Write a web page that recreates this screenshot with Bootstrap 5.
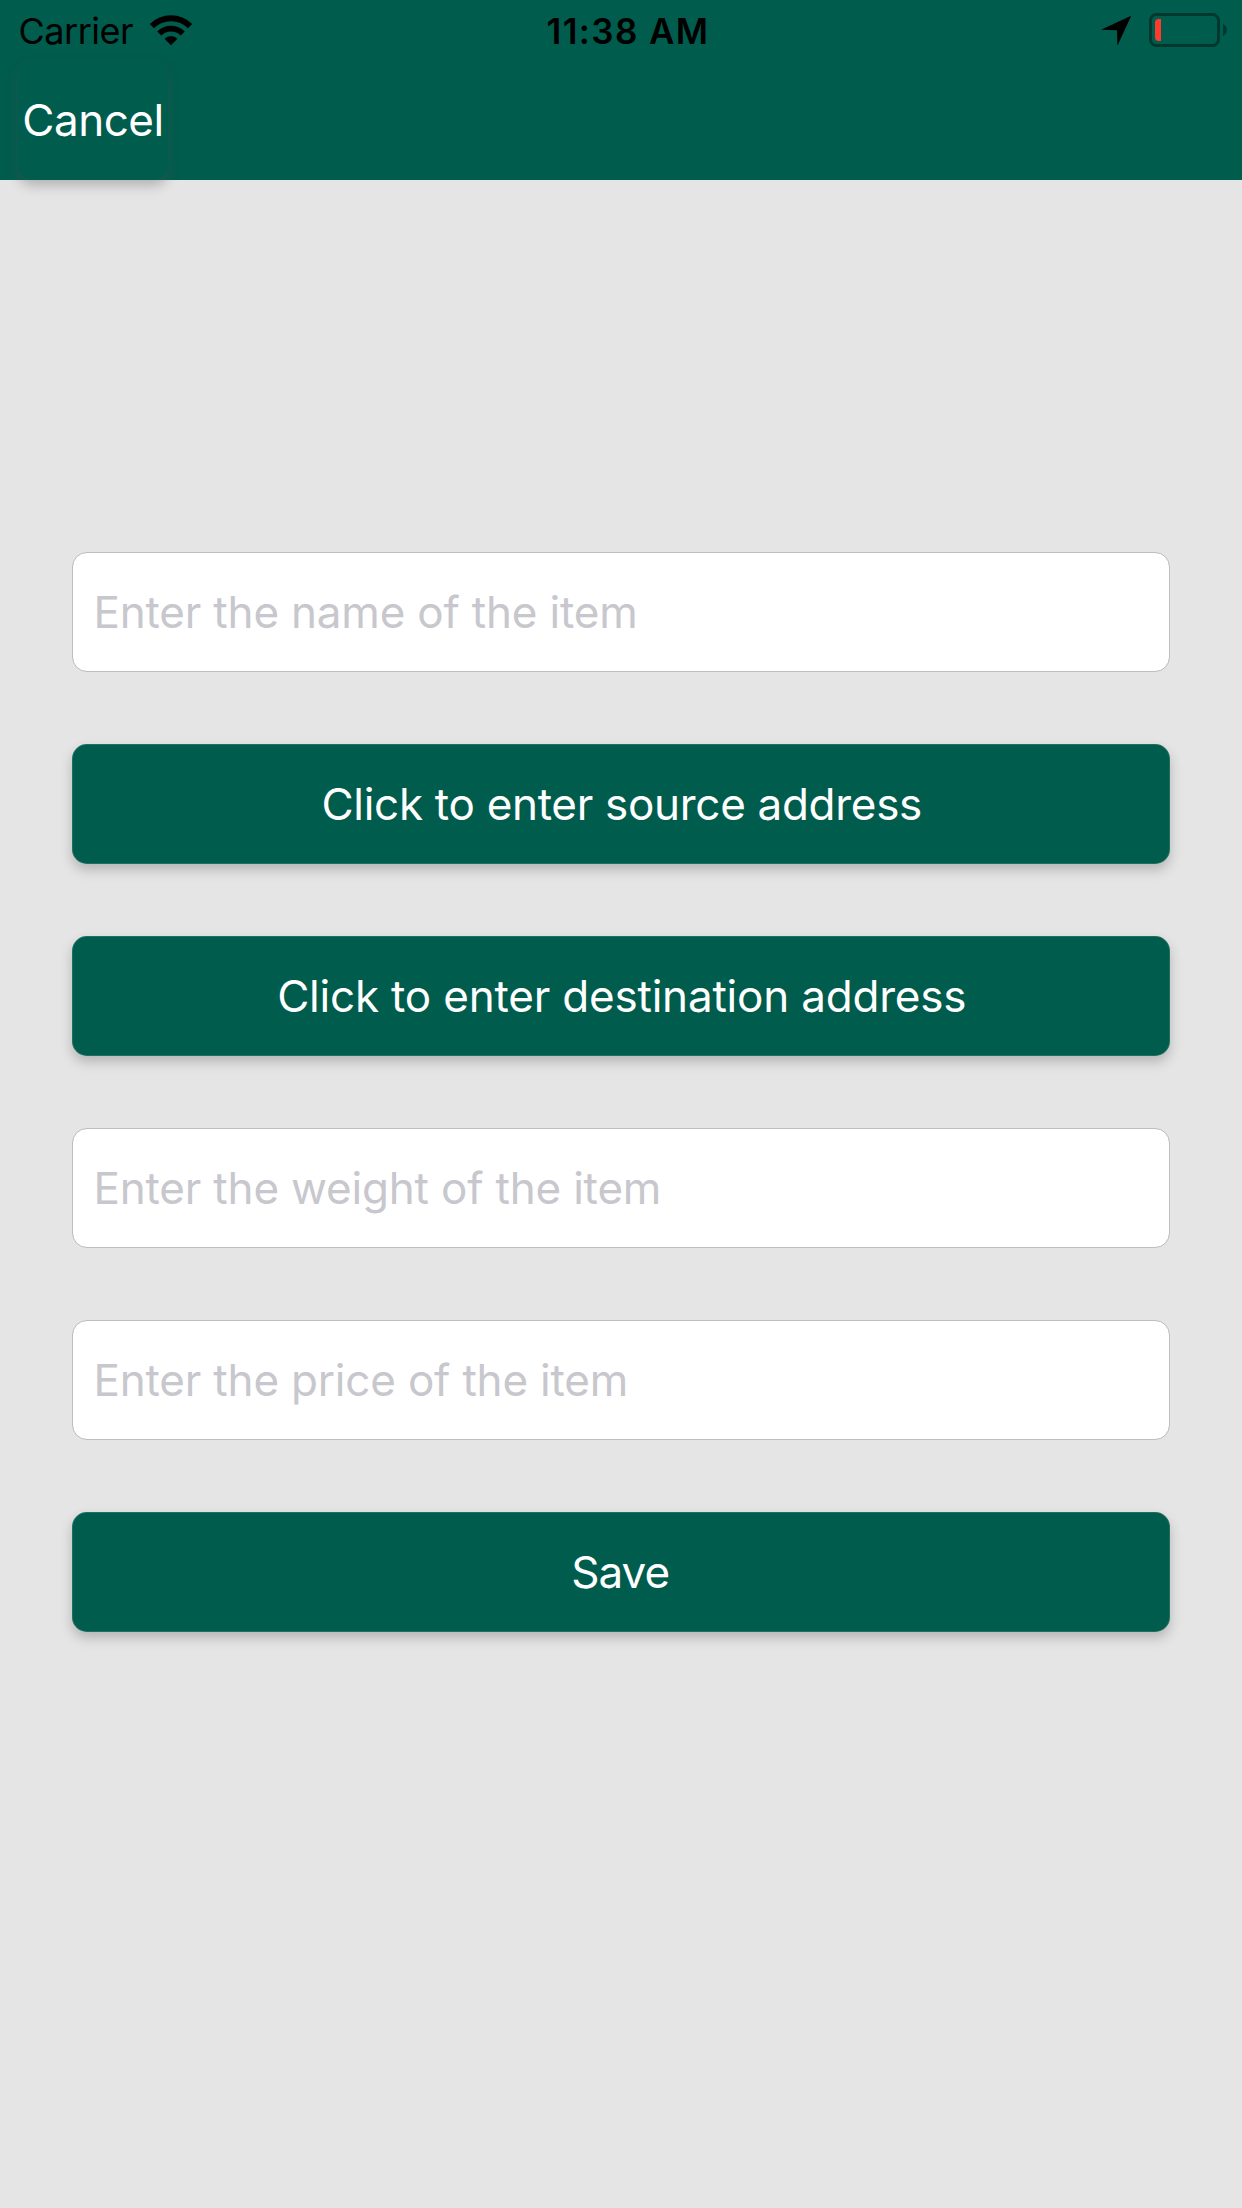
<!DOCTYPE html>
<html lang="en">
<head>
<meta charset="utf-8">
<meta name="viewport" content="width=device-width, initial-scale=1">
<title>New item</title>
<link rel="stylesheet" href="https://cdn.jsdelivr.net/npm/bootstrap@5.3.0/dist/css/bootstrap.min.css">
<style>
  body { font-family: Inter, "Liberation Sans", sans-serif; background: #e5e5e5; min-height: 2208px; }
  .app-header { background: #005c4d; height: 180px; }
  .status-bar { height: 60px; color: #000; line-height: 62px; }
  .status-carrier { font-size: 36px; padding-left: 18.5px; width: 546.5px; letter-spacing: -.48px; }
  .status-carrier svg { margin: 14px 0 0 16px; }
  .status-time { font-size: 35px; font-weight: 600; letter-spacing: 1.37px; }
  .app-btn { --bs-btn-color: #fff; --bs-btn-bg: #005c4d; --bs-btn-hover-color: #fff; --bs-btn-hover-bg: #005043;
    --bs-btn-border-width: 0; --bs-btn-border-radius: 15px; --bs-btn-font-size: 44px;
    height: 120px; line-height: 120px; box-shadow: 0 6px 12px rgba(80,80,80,.32); }
  .item-form .app-btn { box-shadow: 0 6px 12px rgba(80,80,80,.32), inset 0 0 0 1px rgba(229,229,229,.13); }
  .cancel-btn { width: 150px; margin-left: 18px; letter-spacing: -.5px; }
  .source-btn { letter-spacing: -.3px; text-indent: 1.5px; }
  .destination-btn { letter-spacing: -.2px; text-indent: 1.5px; }
  .save-btn { letter-spacing: -1px; text-indent: -1.5px; }
  .item-form { padding: 372px 72px 0; gap: 72px; }
  .item-input.form-control { height: 120px; border: 1px solid #bebebe; border-radius: 15px; font-size: 44px; padding: 0 20.5px; letter-spacing: -.19px; }
  .item-input::placeholder { color: #c7c7cd; opacity: 1; }
</style>
</head>
<body>
<header class="app-header">
  <div class="status-bar d-flex align-items-start">
    <div class="status-carrier d-flex align-items-start">
      <span>Carrier</span>
      <svg width="44" height="32" viewBox="0 0 44 32" aria-label="Wi-Fi">
        <path d="M.8 10A30 30 0 0 1 43.2 10L39 14.2A24 24 0 0 0 5 14.2Z"/>
        <path d="M8.2 17.4A19.5 19.5 0 0 1 35.8 17.4L31.7 21.5A13.7 13.7 0 0 0 12.3 21.5Z"/>
        <path d="M15.5 24.7A9.2 9.2 0 0 1 28.5 24.7L22 31.2Z"/>
      </svg>
    </div>
    <span class="status-time">11:38 AM</span>
    <svg class="ms-auto" width="142" height="60" viewBox="1100 0 142 60" aria-label="Location in use, battery low">
      <path d="M1131.2 15.8L1117.4 45.8L1117 30.2L1101 29.7Z"/>
      <rect x="1150.5" y="14.5" width="68" height="31" rx="6" fill="none" stroke="#00382f" stroke-width="3"/>
      <path d="M1223 24C1228 26.5 1228 33.5 1223 36Z" fill="#00382f"/>
      <path d="M1161 19V41H1159A4 4 0 0 1 1155 37V23A4 4 0 0 1 1159 19Z" fill="#ff3b30"/>
    </svg>
  </div>
  <button type="button" class="btn app-btn cancel-btn p-0">Cancel</button>
</header>
<form class="item-form d-flex flex-column">
  <input class="form-control item-input" type="text" placeholder="Enter the name of the item">
  <button type="button" class="btn app-btn source-btn p-0">Click to enter source address</button>
  <button type="button" class="btn app-btn destination-btn p-0">Click to enter destination address</button>
  <input class="form-control item-input" type="text" placeholder="Enter the weight of the item">
  <input class="form-control item-input" type="text" placeholder="Enter the price of the item">
  <button type="submit" class="btn app-btn save-btn p-0">Save</button>
</form>
<script src="https://cdn.jsdelivr.net/npm/bootstrap@5.3.0/dist/js/bootstrap.bundle.min.js"></script>
</body>
</html>
